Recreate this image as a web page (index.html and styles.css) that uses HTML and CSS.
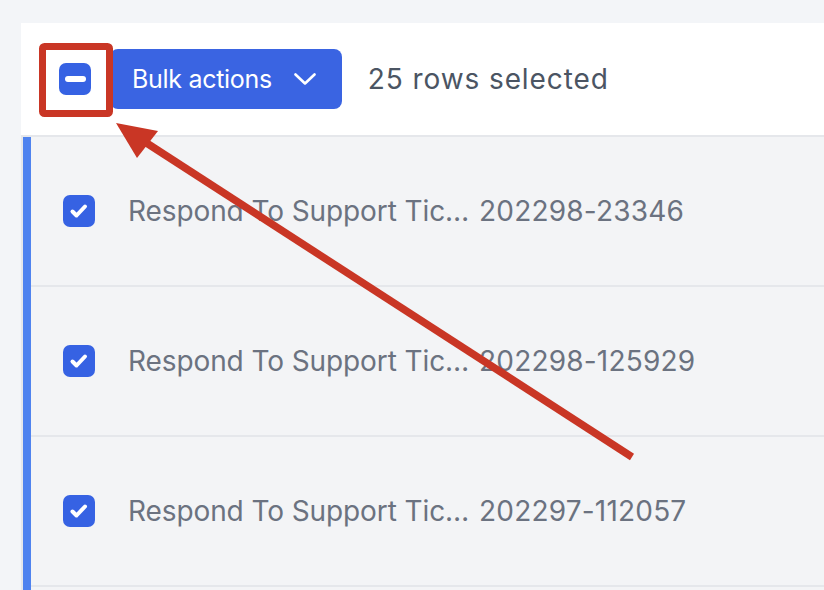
FILE: index.html
```html
<!DOCTYPE html>
<html lang="en">
<head>
<meta charset="utf-8">
<title>Bulk actions</title>
<link rel="stylesheet" href="styles.css">
</head>
<body>
<div class="card">
  <div class="toolbar">
    <span class="cb cb-indeterminate"><span class="dash"></span></span>
    <button class="bulk-btn">Bulk actions
      <svg class="chev" width="22" height="12" viewBox="0 0 22 12"><path d="M1.5 1.5 L11 10.5 L20.5 1.5" fill="none" stroke="#fff" stroke-width="2.6" stroke-linecap="round" stroke-linejoin="round"/></svg>
    </button>
    <span class="count">25 rows selected</span>
  </div>
  <div class="body">
    <div class="rows">
      <div class="row">
        <span class="cb"><svg width="32" height="32" viewBox="0 0 32 32"><path d="M9.5 16.5 L13.5 20.5 L22 11.5" fill="none" stroke="#fff" stroke-width="4" stroke-linecap="round" stroke-linejoin="round"/></svg></span>
        <span class="title">Respond To Support Tic…</span>
        <span class="num">202298-23346</span>
      </div>
      <div class="row">
        <span class="cb"><svg width="32" height="32" viewBox="0 0 32 32"><path d="M9.5 16.5 L13.5 20.5 L22 11.5" fill="none" stroke="#fff" stroke-width="4" stroke-linecap="round" stroke-linejoin="round"/></svg></span>
        <span class="title">Respond To Support Tic…</span>
        <span class="num">202298-125929</span>
      </div>
      <div class="row">
        <span class="cb"><svg width="32" height="32" viewBox="0 0 32 32"><path d="M9.5 16.5 L13.5 20.5 L22 11.5" fill="none" stroke="#fff" stroke-width="4" stroke-linecap="round" stroke-linejoin="round"/></svg></span>
        <span class="title">Respond To Support Tic…</span>
        <span class="num">202297-112057</span>
      </div>
    </div>
  </div>
</div>
<svg class="annot" width="824" height="590" viewBox="0 0 824 590">
  <rect x="42.5" y="46.5" width="67" height="67" rx="2" fill="none" stroke="#c93625" stroke-width="7"/>
  <line x1="632" y1="457" x2="145" y2="142" stroke="#c93625" stroke-width="7.5"/>
  <polygon points="116,123 158,131 137,158" fill="#c93625"/>
</svg>
</body>
</html>
```
FILE: styles.css
```css
html, body {
  margin: 0;
  padding: 0;
}
body {
  background: #f3f5f8;
  font-family: Inter, "Noto Sans", sans-serif;
  width: 824px;
  height: 590px;
  overflow: hidden;
  position: relative;
}
.card {
  margin: 23px 0 0 21px;
  background: #ffffff;
}
.toolbar {
  height: 114px;
  box-sizing: border-box;
  display: flex;
  align-items: center;
  padding-left: 38px;
  border-bottom: 2px solid #e5e7eb;
}
.cb {
  width: 32px;
  height: 32px;
  border-radius: 7px;
  background: #3662e3;
  display: flex;
  align-items: center;
  justify-content: center;
  flex: none;
}
.dash {
  width: 21px;
  height: 6px;
  border-radius: 3px;
  background: #ffffff;
}
.bulk-btn {
  margin-left: 19px;
  height: 60px;
  display: flex;
  align-items: center;
  gap: 22px;
  padding: 0 26px 0 22px;
  border: none;
  border-radius: 8px;
  background: #3a64e2;
  color: #ffffff;
  font-family: Inter, "Noto Sans", sans-serif;
  font-size: 25px;
  font-weight: 400;
  letter-spacing: -0.3px;
}
.chev {
  display: block;
}
.count {
  margin-left: 26px;
  font-size: 28px;
  color: #4b5563;
  letter-spacing: 0.9px;
}
.body {
  background: #e6e8eb;
  padding-left: 2px;
  height: 453px;
}
.rows {
  border-left: 8px solid #4f83ef;
  background: #f3f4f6;
  height: 100%;
}
.row {
  height: 148px;
  border-bottom: 2px solid #e5e7eb;
  display: flex;
  align-items: center;
  padding-left: 32px;
}
.title {
  margin-left: 33px;
  width: 351px;
  font-size: 28px;
  color: #6b7280;
  white-space: nowrap;
  letter-spacing: -0.1px;
}
.num {
  font-size: 28px;
  color: #6b7280;
  letter-spacing: 0.2px;
}
.annot {
  position: absolute;
  left: 0;
  top: 0;
  pointer-events: none;
}
```
